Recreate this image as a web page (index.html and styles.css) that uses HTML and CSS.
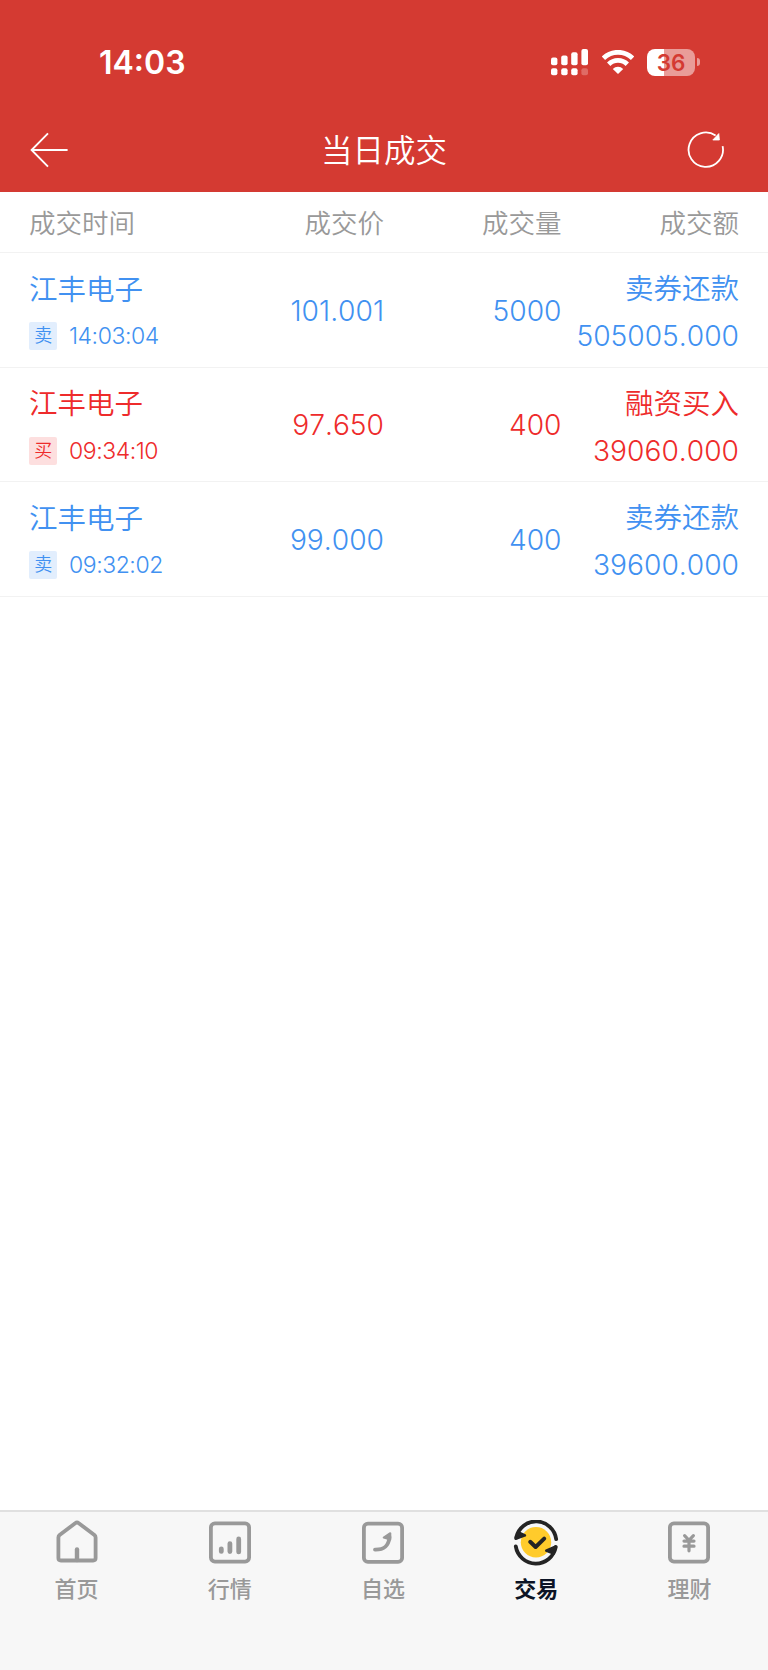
FILE: index.html
```html
<!DOCTYPE html>
<html lang="zh-CN">
<head>
    <meta charset="UTF-8">
    <meta name="viewport" content="width=device-width, initial-scale=1.0">
    <title>当日成交</title>
    <link rel="stylesheet" href="styles.css">
</head>
<body>
    <header class="header">
        <div class="status-bar">
            <span class="clock">14:03</span>
            <div class="status-icons">
                <svg class="signal" width="38" height="27" viewBox="0 0 38 27" fill="#fff">
                    <rect x="0" y="8.5" width="6.4" height="7.7" rx="2"/>
                    <rect x="10.2" y="6.5" width="6.4" height="9.7" rx="2"/>
                    <rect x="20.2" y="3.2" width="6.4" height="13" rx="2"/>
                    <rect x="30.4" y="0" width="6.6" height="16.2" rx="2"/>
                    <rect x="0" y="19.3" width="6.4" height="7" rx="2"/>
                    <rect x="10.2" y="19.3" width="6.4" height="7" rx="2"/>
                    <rect x="20.2" y="19.3" width="6.4" height="7" rx="2"/>
                    <rect x="30.4" y="19.3" width="6.6" height="7" rx="2" opacity="0.25"/>
                </svg>
                <svg class="wifi" width="32" height="24" viewBox="0 0 32 24" fill="none" stroke="#fff">
                    <path d="M1.4 8.2a21 21 0 0 1 29.2 0" stroke-width="4.8"/>
                    <path d="M6.7 14.2a13.2 13.2 0 0 1 18.6 0" stroke-width="4.8"/>
                    <path d="M16 24l-5.2-5a7.4 7.4 0 0 1 10.4 0z" fill="#fff" stroke="none"/>
                </svg>
                <div class="battery">
                    <div class="battery-body">36</div>
                    <div class="battery-tip"></div>
                </div>
            </div>
        </div>
        <div class="nav-bar">
            <svg width="38" height="36" viewBox="0 0 38 36" fill="none" stroke="#fff" stroke-width="1.9">
                <path d="M18 1.3L1.6 18 18 34.7M1.6 18H37.6"/>
            </svg>
            <h1>当日成交</h1>
            <svg width="37" height="38" viewBox="0 0 37 38" fill="none" stroke="#fff" stroke-width="1.8">
                <path d="M35.6 15.1A17.2 17.2 0 1 1 28.6 4.6"/>
                <path d="M31.8 2.6l.6 6.4h-6.6z" fill="#fff" stroke-width="0.8"/>
            </svg>
        </div>
    </header>

    <main class="deals">
        <div class="deal-head">
            <span>成交时间</span>
            <span>成交价</span>
            <span>成交量</span>
            <span>成交额</span>
        </div>
        <div class="deal sell">
            <div class="stock">
                <div class="name">江丰电子</div>
                <div class="time"><span class="tag">卖</span>14:03:04</div>
            </div>
            <div class="num">101.001</div>
            <div class="num">5000</div>
            <div class="amount">
                <div class="name">卖券还款</div>
                <div class="num">505005.000</div>
            </div>
        </div>
        <div class="deal buy">
            <div class="stock">
                <div class="name">江丰电子</div>
                <div class="time"><span class="tag">买</span>09:34:10</div>
            </div>
            <div class="num">97.650</div>
            <div class="num">400</div>
            <div class="amount">
                <div class="name">融资买入</div>
                <div class="num">39060.000</div>
            </div>
        </div>
        <div class="deal sell">
            <div class="stock">
                <div class="name">江丰电子</div>
                <div class="time"><span class="tag">卖</span>09:32:02</div>
            </div>
            <div class="num">99.000</div>
            <div class="num">400</div>
            <div class="amount">
                <div class="name">卖券还款</div>
                <div class="num">39600.000</div>
            </div>
        </div>
    </main>

    <nav class="tabs">
        <a class="tab">
            <svg width="46" height="46" viewBox="0 0 46 46" fill="none" stroke="#999" stroke-width="3.8" stroke-linejoin="round">
                <path d="M4.4 17.4Q4.4 16 5.6 15L21.2 3.2Q23 1.9 24.8 3.2L40.4 15Q41.6 16 41.6 17.4V38Q41.6 40.5 39.1 40.5H6.9Q4.4 40.5 4.4 38z"/>
                <path d="M23 40V29.5" stroke-width="4.4" stroke-linecap="round"/>
            </svg>
            <span>首页</span>
        </a>
        <a class="tab">
            <svg width="46" height="46" viewBox="0 0 46 46" fill="none" stroke="#999" stroke-width="3.8">
                <rect x="3.9" y="3.4" width="38.2" height="38.2" rx="4"/>
                <path d="M14.3 28.8v2.6M22.9 23.6v8M31.7 19v12.9" stroke-width="4.8" stroke-linecap="round"/>
            </svg>
            <span>行情</span>
        </a>
        <a class="tab">
            <svg width="46" height="46" viewBox="0 0 46 46" fill="none" stroke="#999" stroke-width="3.8">
                <rect x="3.9" y="3.7" width="38.2" height="38.2" rx="4"/>
                <path d="M15 29.6C24 29.8 28.5 26.5 29.5 17" stroke-linecap="round"/>
                <path d="M30.3 13.2v6.4l-6.6-2z" fill="#999" stroke-width="2" stroke-linejoin="round"/>
            </svg>
            <span>自选</span>
        </a>
        <a class="tab active">
            <svg width="46" height="46" viewBox="0 0 46 46" fill="none" stroke="#242424" stroke-width="3.8" stroke-linecap="round" stroke-linejoin="round">
                <circle cx="23" cy="22.2" r="15.2" fill="#ffcb2b" stroke="none"/>
                <path d="M3.2 17.5A20.3 20.3 0 0 1 43.2 19.2M42.8 27A20.3 20.3 0 0 1 2.8 26.4"/>
                <path d="M5.5 12.4L12 15.4 2.6 18.8zM40.6 33.6L33.2 30.6 42.8 26.4z" fill="#242424" stroke-width="2.4"/>
                <path d="M17.2 21.8l5.4 5.2 8.6-8.4" stroke-width="4"/>
            </svg>
            <span>交易</span>
        </a>
        <a class="tab">
            <svg width="46" height="46" viewBox="0 0 46 46" fill="none" stroke="#999" stroke-width="3.8">
                <rect x="3.9" y="3.4" width="38.2" height="38.2" rx="4"/>
                <path d="M18.6 15.7l4.4 4.6 4.4-4.6M18 21.1h10M18 26.2h10M23 21v9.8" stroke-width="3.2" stroke-linecap="round"/>
            </svg>
            <span>理财</span>
        </a>
    </nav>
</body>
</html>
```
FILE: styles.css
```css
* {
    box-sizing: border-box;
}
body {
    margin: 0;
    height: 1670px;
    display: flex;
    flex-direction: column;
    background-color: #fff;
    font-family: Inter, "Noto Sans CJK SC", sans-serif;
}
.header {
    height: 192px;
    background-color: #d43a32;
    color: #fff;
}
.status-bar {
    height: 108px;
    padding: 16px 68px 0 99px;
    display: flex;
    align-items: center;
    justify-content: space-between;
}
.clock {
    padding-top: 2px;
    font-size: 32px;
    font-weight: 600;
    line-height: 40px;
}
.status-icons {
    display: flex;
    align-items: center;
    gap: 13px;
}
.battery {
    display: flex;
    align-items: center;
    gap: 2px;
}
.battery-body {
    width: 48px;
    height: 27px;
    border-radius: 8px;
    background: linear-gradient(to right, #fff 36%, #e99c98 36%);
    color: #d43a32;
    font-size: 22.5px;
    font-weight: 600;
    line-height: 27px;
    text-align: center;
}
.battery-tip {
    width: 3px;
    height: 8px;
    border-radius: 0 4px 4px 0;
    background-color: #e99c98;
}
.nav-bar {
    height: 84px;
    padding: 0 44px 0 30px;
    display: flex;
    align-items: center;
    justify-content: space-between;
}
.nav-bar h1 {
    margin: 1px 0 0 13px;
    font-size: 31.5px;
    font-weight: 350;
    line-height: 40px;
}
.deals {
    flex: 1;
}
.deal-head,
.deal {
    display: grid;
    grid-template-columns: repeat(4, 1fr);
    align-items: center;
    padding: 0 29px;
    border-bottom: 1px solid #f2f2f2;
    text-align: right;
    white-space: nowrap;
}
.deal-head {
    height: 61px;
    padding-bottom: 1px;
    color: #999;
    font-size: 26.5px;
    font-weight: 350;
}
.deal-head span:first-child,
.stock {
    text-align: left;
}
.deal {
    height: 114.6px;
    padding-top: 6px;
}
.deal > .num {
    padding-bottom: 3px;
}
.sell {
    color: #4191f1;
}
.buy {
    color: #ee2b2b;
}
.name {
    font-size: 28.5px;
    font-weight: 350;
    line-height: 47px;
}
.num {
    font-size: 28.2px;
    font-weight: 330;
    font-kerning: none;
    line-height: 47px;
}
.time {
    display: flex;
    align-items: center;
    height: 47px;
    font-size: 23px;
    font-weight: 330;
    letter-spacing: -0.45px;
}
.tag {
    width: 28px;
    height: 28px;
    margin-right: 12px;
    border-radius: 2px;
    font-size: 18px;
    font-weight: 350;
    line-height: 28px;
    text-align: center;
}
.sell .tag {
    background-color: #e2eefd;
}
.buy .tag {
    background-color: #fddfdf;
}
.amount {
    justify-self: end;
}
.amount .num {
    line-height: 48px;
}
.tabs {
    height: 160px;
    padding-right: 2px;
    display: flex;
    border-top: 2px solid #e0e0e0;
    background-color: #f7f7f7;
}
.tab {
    flex: 1;
    padding-top: 8px;
    display: flex;
    flex-direction: column;
    align-items: center;
    color: #999;
    font-size: 22px;
    font-weight: 500;
    line-height: 30px;
}
.tab span {
    margin-top: 8px;
}
.tab.active {
    color: #0c1426;
    font-weight: 700;
}
```
